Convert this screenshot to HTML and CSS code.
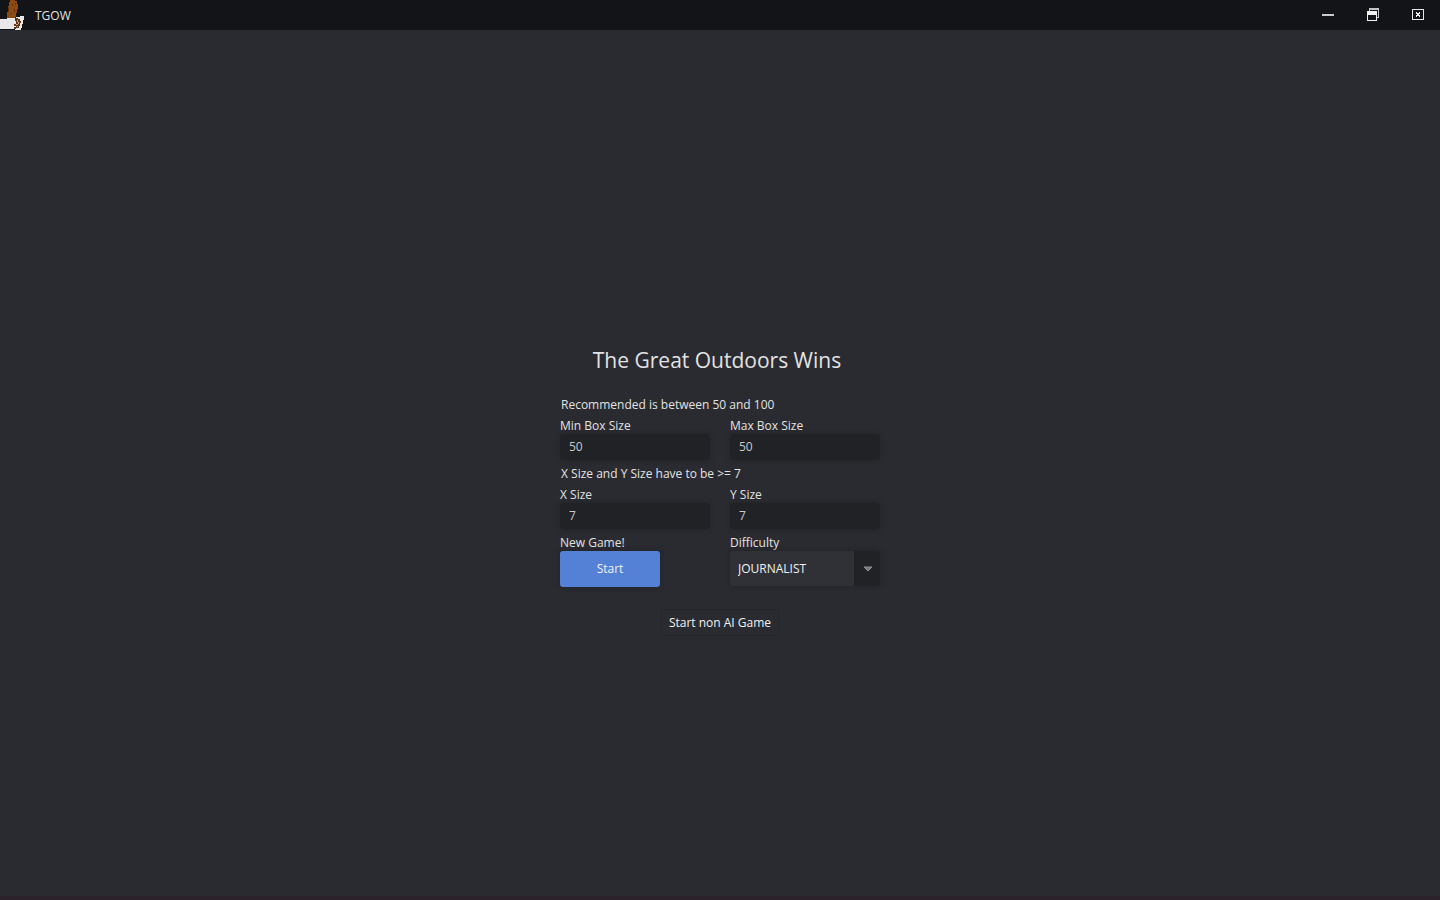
FILE: index.html
```html
<!DOCTYPE html>
<html lang="en">
<head>
<meta charset="utf-8">
<title>TGOW</title>
<link rel="stylesheet" href="styles.css">
</head>
<body>
<header class="titlebar">
  <svg class="logo" viewBox="0 0 24 30" shape-rendering="crispEdges" aria-hidden="true">
    <path fill="#8b4a14" d="M10 0h5v1h2v3h1v5h-1v4h-1v4h-1v2H7v-7h1V6h1V2h1z"/>
    <path fill="#653008" d="M8 7h1v5H8zM15 3h1v2h-1zM14 9h1v3h-1zM10 13h2v1h-2zM12 4h1v2h-1z"/>
    <path fill="#e9e7e7" d="M0 19h7v-1h9v-1h4v-1h4v4h-1v4h-1v4h-1v2h-6v-1H0z"/>
    <path fill="#5d3518" d="M15 18h3v1h2v2h1v2h-1v3h-1v2h-3v-2h-2v-2h2v-3h-1zM14 27h2v2h-2z"/>
    <path fill="#d4a58b" d="M17 20h1v2h-1zM16 24h2v1h-2zM18 22h1v2h-1zM17 26h1v1h-1z"/>
  </svg>
  <span class="app-name">TGOW</span>
  <div class="window-controls">
    <button class="window-button" type="button" aria-label="Minimize">
      <svg viewBox="0 0 14 14" shape-rendering="crispEdges"><path fill="#c9cacb" d="M1 6h12v2H1z"/></svg>
    </button>
    <button class="window-button" type="button" aria-label="Restore">
      <svg viewBox="0 0 14 14" shape-rendering="crispEdges"><path fill="#c4c5c7" fill-rule="evenodd" d="M3 0h10v10h-2V9h1V2H4v1H3z"/><path fill="#f0f0f1" fill-rule="evenodd" d="M1 3h10v10H1zM2 7v5h8V7z"/></svg>
    </button>
    <button class="window-button" type="button" aria-label="Close">
      <svg viewBox="0 0 14 14" shape-rendering="crispEdges"><path fill="#e6e7e8" fill-rule="evenodd" d="M1 1h12v11H1zM2 2v9h10V2z"/><path fill="#f0f0f0" d="M5 4h1v1h2V4h1v2H8v1h1v2H8V8H6v1H5V7h1V6H5z"/></svg>
    </button>
  </div>
</header>
<main class="screen">
  <h1 class="title">The Great Outdoors Wins</h1>
  <form class="settings">
    <p class="hint">Recommended is between 50 and 100</p>
    <div class="row">
      <div class="field"><label for="min-box">Min Box Size</label><input class="text-input" id="min-box" type="text" value="50"></div>
      <div class="field"><label for="max-box">Max Box Size</label><input class="text-input" id="max-box" type="text" value="50"></div>
    </div>
    <p class="hint">X Size and Y Size have to be &gt;= 7</p>
    <div class="row">
      <div class="field"><label for="x-size">X Size</label><input class="text-input" id="x-size" type="text" value="7"></div>
      <div class="field"><label for="y-size">Y Size</label><input class="text-input" id="y-size" type="text" value="7"></div>
    </div>
    <div class="row">
      <div class="field"><label for="start">New Game!</label><button class="start" id="start" type="button">Start</button></div>
      <div class="field">
        <label for="difficulty">Difficulty</label>
        <div class="combo">
          <select class="combo-select" id="difficulty"><option>JOURNALIST</option></select>
          <svg class="combo-arrow" viewBox="0 0 10 6" aria-hidden="true"><path fill="#77787a" stroke="#909193" d="M1 1h8L5 5z"/></svg>
        </div>
      </div>
    </div>
  </form>
  <button class="plain" type="button">Start non AI Game</button>
</main>
<footer class="edge"></footer>
</body>
</html>
```
FILE: styles.css
```css
* { box-sizing: border-box; }
body {
  margin: 0;
  min-height: 100vh;
  display: flex;
  flex-direction: column;
  background: #2a2b30;
  color: #e2e2e3;
  font: 12px/16px "Open Sans", "Noto Sans", sans-serif;
}
button, input, select { font: inherit; color: inherit; margin: 0; }
.titlebar {
  display: flex;
  align-items: center;
  height: 30px;
  background: #121418;
}
.logo { width: 24px; height: 30px; }
.app-name { margin-left: 11px; line-height: 18px; padding-top: 1px; }
.window-controls { display: flex; margin-left: auto; }
.window-button {
  display: grid;
  place-items: center;
  width: 45px;
  height: 30px;
  padding: 0;
  border: 0;
  background: none;
}
.window-button svg { width: 14px; height: 14px; }
.screen {
  flex: 1;
  display: flex;
  flex-direction: column;
  align-items: center;
  justify-content: center;
  padding-top: 54px;
}
.title {
  margin: 0 6px 20px 0;
  font-size: 21px;
  line-height: 33px;
  font-weight: 400;
}
.settings { width: 320px; }
.hint { margin: 0 0 5px; padding-left: 1px; }
.row {
  display: grid;
  grid-template-columns: 1fr 1fr;
  gap: 20px;
  margin-bottom: 6px;
}
.row:last-child { margin-bottom: 0; }
.field { display: flex; flex-direction: column; align-items: flex-start; }
.text-input {
  width: 100%;
  height: 26px;
  padding: 0 9px 1px;
  border: 0;
  border-radius: 4px;
  background: #212226;
  box-shadow: 0 0 4px #212226;
  color: #c9c9ca;
}
.start {
  width: 100px;
  height: 36px;
  border: 0;
  border-radius: 3px;
  background: #5481d5;
  box-shadow: 0 0 4px #202126;
  color: #f1f1f1;
}
.combo {
  display: grid;
  grid-template-columns: 1fr 25px;
  align-items: center;
  width: 100%;
  height: 35px;
  border-radius: 3px;
  background: linear-gradient(to left, #212226 26px, #303136 26px);
  box-shadow: 0 0 4px #212226;
}
.combo-select {
  grid-area: 1 / 1 / 2 / 3;
  height: 35px;
  padding: 0 8px;
  border: 0;
  background: none;
  appearance: none;
  color: #f1f1f1;
}
.combo-arrow {
  grid-area: 1 / 2;
  justify-self: center;
  width: 10px;
  height: 6px;
  pointer-events: none;
}
.plain {
  margin-top: 22px;
  height: 27px;
  padding: 0 7px;
  border: 1px solid #25262a;
  background: #2a2b30;
  color: #f1f1f1;
}
.edge { height: 4px; background: #2c222b; }
```
